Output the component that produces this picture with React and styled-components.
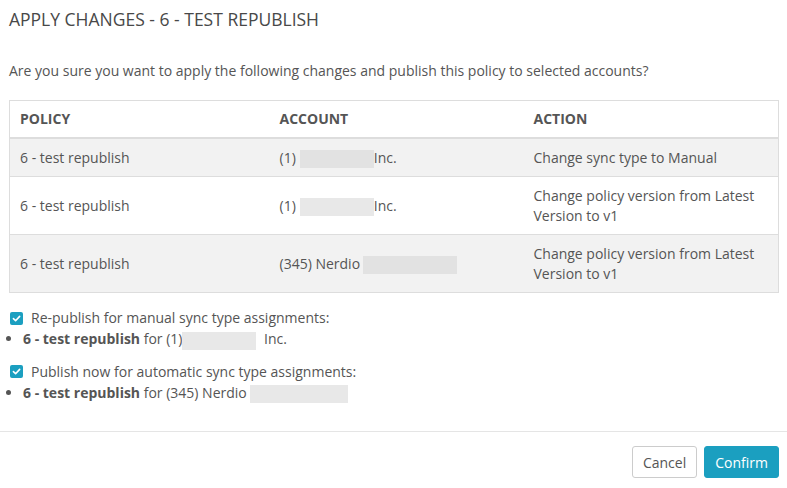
import React from "react";
import styled, { createGlobalStyle } from "styled-components";

const Global = createGlobalStyle`
  html, body { margin: 0; padding: 0; background: #fff; }
  body { font-family: "Open Sans", "Noto Sans", sans-serif; color: #555; }
  * { box-sizing: border-box; }
`;

const Modal = styled.div`
  width: 787px;
  height: 488px;
  background: #fff;
  display: flex;
  flex-direction: column;
`;

const Header = styled.div`
  padding: 9px 9px 0;
`;

const Title = styled.h1`
  margin: 0;
  font-size: 17.5px;
  line-height: 20px;
  font-weight: 400;
  color: #484848;
  text-transform: uppercase;
`;

const Body = styled.div`
  padding: 32px 9px 0;
  font-size: 14px;
  line-height: 20px;
`;

const Intro = styled.p`
  margin: 0 0 19px;
`;

const Table = styled.table`
  width: 770px;
  border-collapse: collapse;
  table-layout: fixed;
  border: 1px solid #ddd;
`;

const Th = styled.th`
  text-align: left;
  font-weight: 700;
  padding: 8px 10px 8px;
  border-bottom: 2px solid #ddd;
  color: #555;
`;

const Tr = styled.tr`
  background: ${(p) => (p.$striped ? "#f2f2f2" : "#fff")};
  border-top: 1px solid #ddd;
`;

const Td = styled.td`
  padding: 9px 10px 8px;
  vertical-align: middle;
`;

const Redacted = styled.span`
  display: inline-block;
  width: ${(p) => p.$w}px;
  height: 18px;
  margin-left: ${(p) => p.$ml || 0}px;
  margin-right: ${(p) => p.$mr || 0}px;
  vertical-align: middle;
  background: ${(p) => p.$bg || "#e2e2e2"};
`;

const Groups = styled.div`
  margin-top: 15px;
  display: flex;
  flex-direction: column;
  gap: 12px;
`;

const Group = styled.div`
  display: flex;
  flex-direction: column;
  gap: 1px;
`;

const CheckRow = styled.label`
  display: flex;
  align-items: center;
  gap: 8px;
  padding-left: 1px;
`;

const Box = styled.span`
  width: 13px;
  height: 13px;
  border-radius: 2px;
  background: #1b9fc0;
  display: inline-flex;
  align-items: center;
  justify-content: center;
  flex: none;
`;

const List = styled.ul`
  margin: 0;
  padding-left: 14px;
  list-style: disc;
`;

const Footer = styled.div`
  margin-top: auto;
  border-top: 1px solid #e5e5e5;
  padding: 14px 8px 10px;
  display: flex;
  justify-content: flex-end;
  gap: 7px;
`;

const Button = styled.button`
  height: 32px;
  padding: 0 10px;
  border-radius: 3px;
  font-family: "Open Sans", "Noto Sans", sans-serif;
  font-size: 14px;
  border: 1px solid ${(p) => (p.$primary ? "#1b9fc0" : "#ccc")};
  background: ${(p) => (p.$primary ? "#1b9fc0" : "#fff")};
  color: ${(p) => (p.$primary ? "#fff" : "#555")};
`;

function Check() {
  return (
    <Box>
      <svg width="9" height="9" viewBox="0 0 10 10">
        <path d="M1.6 5.2 L4 7.5 L8.5 2.6" fill="none" stroke="#fff" strokeWidth="1.8" strokeLinecap="round" strokeLinejoin="round" />
      </svg>
    </Box>
  );
}

const rows = [
  { account: <>(1)<Redacted $w={74} $ml={4} />Inc.</>, action: "Change sync type to Manual" },
  { account: <>(1)<Redacted $w={74} $ml={4} $bg="#e8e8e8" />Inc.</>, action: "Change policy version from Latest Version to v1" },
  { account: <>(345) Nerdio<Redacted $w={94} $ml={3} /></>, action: "Change policy version from Latest Version to v1" },
];

export default function App() {
  return (
    <>
      <Global />
      <Modal>
        <Header>
          <Title>Apply changes - 6 - test republish</Title>
        </Header>
        <Body>
          <Intro>Are you sure you want to apply the following changes and publish this policy to selected accounts?</Intro>
          <Table>
            <colgroup>
              <col style={{ width: 260 }} />
              <col style={{ width: 254 }} />
              <col />
            </colgroup>
            <thead>
              <tr>
                <Th>POLICY</Th>
                <Th>ACCOUNT</Th>
                <Th>ACTION</Th>
              </tr>
            </thead>
            <tbody>
              {rows.map((r, i) => (
                <Tr key={i} $striped={i % 2 === 0}>
                  <Td>6 - test republish</Td>
                  <Td>{r.account}</Td>
                  <Td>{r.action}</Td>
                </Tr>
              ))}
            </tbody>
          </Table>
          <Groups>
            <Group>
              <CheckRow><Check />Re-publish for manual sync type assignments:</CheckRow>
              <List>
                <li><b>6 - test republish</b> for (1)<Redacted $w={74} $bg="#e8e8e8" $mr={4} /> Inc.</li>
              </List>
            </Group>
            <Group>
              <CheckRow><Check />Publish now for automatic sync type assignments:</CheckRow>
              <List>
                <li><b>6 - test republish</b> for (345) Nerdio <Redacted $w={98} $bg="#e8e8e8" /></li>
              </List>
            </Group>
          </Groups>
        </Body>
        <Footer>
          <Button>Cancel</Button>
          <Button $primary>Confirm</Button>
        </Footer>
      </Modal>
    </>
  );
}
